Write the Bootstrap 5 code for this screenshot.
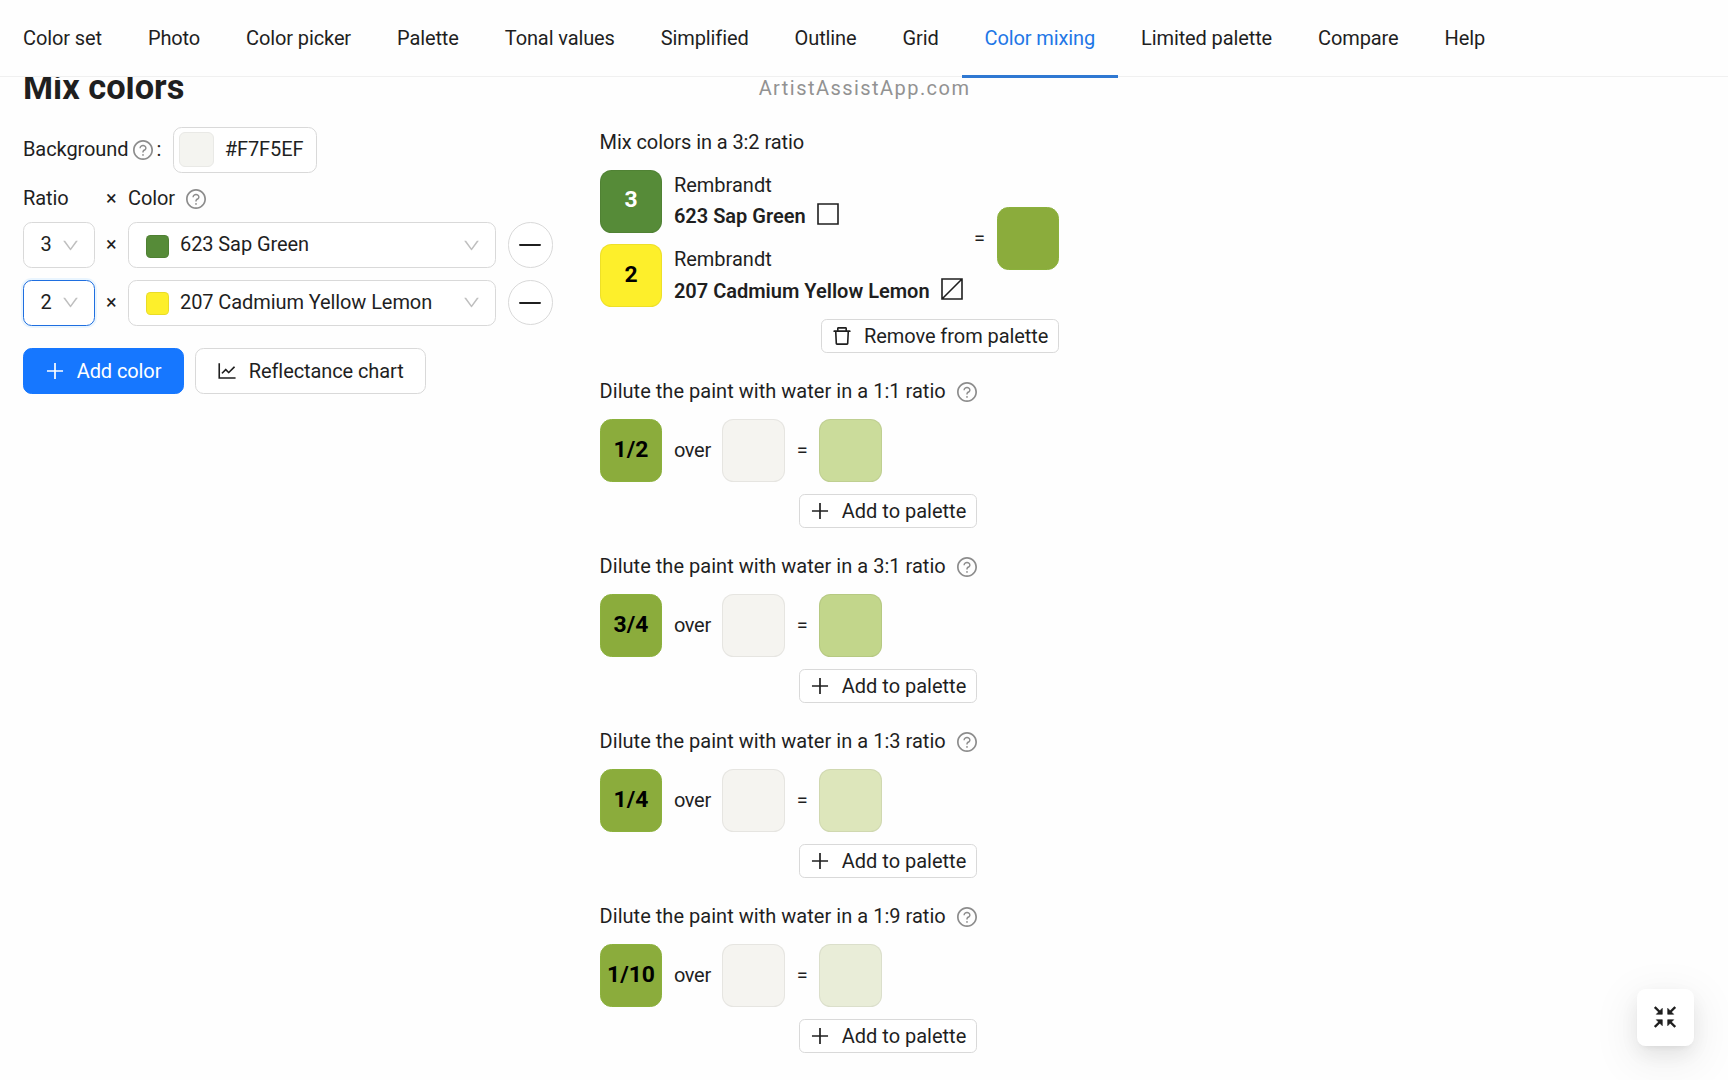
<!DOCTYPE html>
<html lang="en">
<head>
<meta charset="utf-8">
<meta name="viewport" content="width=device-width, initial-scale=1">
<title>Color mixing</title>
<link href="https://cdn.jsdelivr.net/npm/bootstrap@5.3.0/dist/css/bootstrap.min.css" rel="stylesheet">
<style>
  body { font-family: Roboto, "Liberation Sans", sans-serif; font-size: 20px; line-height: 31.6px; color: #1f1f1f; background: #fefefe; overflow: hidden; }
  .ic { width: 20px; height: 20px; fill: currentColor; flex: none; display: block; }
  .ic-help { color: #8c8c8c; }
  .ic-down { width: 17px; height: 17px; color: #bfbfbf; }
  .topbar { height: 77px; background: #fefefe; border-bottom: 1.5px solid #f0f0f0; letter-spacing: -.115px; }
  .topbar .nav-link { color: #1f1f1f; padding: 0 23px; height: 77.5px; line-height: 77px; }
  .topbar .nav-link.active { color: #1f77e6; box-shadow: inset 0 -3px #2f78d2; }
  .page { padding: 66.5px 23px 0; }
  .title-row { display: grid; grid-template-columns: 1fr auto 1fr; height: 60px; }
  .title-row h1 { font-size: 34.4px; font-weight: 700; line-height: 40px; margin: 0; }
  .site { color: #929292; letter-spacing: 1.45px; line-height: 43px; padding-left: 1px; }
  .left-pane { width: 576.6px; letter-spacing: -.09px; }
  .left-pane .tool { letter-spacing: -.09px; }
  .field { height: 46px; border: 1.3px solid #d9d9d9; border-radius: 8.6px; background: #fff; }
  .field-focus { border-color: #1f6fe0; box-shadow: 0 0 0 2px rgba(5,145,255,.08); }
  .bg-field { width: 143.5px; padding-left: 4.5px; gap: 11px; margin-left: 12px; }
  .bg-help { margin-left: 5px; }
  .colon { margin-left: 3px; }
  .bg-chip { width: 35px; height: 35px; border-radius: 6px; background: #f4f4f0; border: 1.3px solid #e9e9e6; }
  .ratio-label { width: 71.5px; }
  .color-help { margin-left: 11px; }
  .ratio-field { width: 71.5px; padding: 0 15px 0 16.5px; }
  .times { width: 33.5px; text-align: center; }
  .color-field { width: 368px; padding: 0 15px 0 17px; }
  .paint { width: 23px; height: 23px; border-radius: 4.5px; border: 1px solid rgba(0,0,0,.08); margin: 2px 11px 0 0; }
  .round-btn { width: 45.5px; height: 45.5px; border: 1.3px solid #d9d9d9; border-radius: 50%; background: #fff; margin-left: 11.5px; padding: 0; color: #1f1f1f; }
  .round-btn .ic { width: 26px; height: 26px; }
  .head-line { height: 30px; margin: 11.5px 0 8px; }
  .rows { gap: 11.5px; }
  .actions { margin-top: 22.7px; }
  .tool { --bs-btn-font-size: 20px; --bs-btn-line-height: 1; --bs-btn-color: #1f1f1f; --bs-btn-bg: #fff; --bs-btn-border-color: #d9d9d9; --bs-btn-border-width: 1.3px; --bs-btn-border-radius: 8.6px; --bs-btn-padding-y: 0; --bs-btn-padding-x: 21.2px; height: 46px; display: inline-flex; align-items: center; gap: 11.5px; white-space: nowrap; }
  .tool-main { --bs-btn-color: #fff; --bs-btn-bg: #1677ff; --bs-btn-border-color: #1677ff; }
  .tool-small { --bs-btn-border-radius: 5.7px; --bs-btn-padding-x: 10px; height: 34.4px; align-self: flex-end; }
  .tool-remove { letter-spacing: -.06px; }
  .right-pane { gap: 23px; }
  .mix { width: max-content; gap: 11.5px; }
  .mix-title { letter-spacing: .03px; }
  .mix-title-first { letter-spacing: -.08px; }
  .swatch { width: 62.8px; height: 63px; border-radius: 11.5px; border: 1.3px solid rgba(0,0,0,.06); font-size: 22.9px; font-weight: 700; color: #000; display: flex; align-items: center; justify-content: center; flex: none; padding-bottom: 2px; }
  .over { letter-spacing: -.3px; }
  .base { background: #8bac3c; border-color: #8bb13c; }
  .ground { background: #f5f4f0; }
  .g12 { gap: 11.5px; }
  .paint-name { font-weight: 600; }
  .opacity-mark { width: 22px; height: 22px; fill: none; stroke: #1f1f1f; stroke-width: 1.6; margin: -6px 0 0 11px; display: block; }
  .fab { position: fixed; right: 34px; bottom: 34px; width: 57.4px; height: 57.4px; border-radius: 8.6px; border: 0; background: #fff; padding: 0; box-shadow: 0 8px 22px rgba(0,0,0,.08), 0 4px 8px -5px rgba(0,0,0,.12), 0 12px 40px 10px rgba(0,0,0,.05); }
</style>
<script src="https://cdn.jsdelivr.net/npm/bootstrap@5.3.0/dist/js/bootstrap.bundle.min.js"></script>
</head>
<body>
<svg class="d-none">
  <symbol id="help" viewBox="64 64 896 896"><path d="M512 64C264.6 64 64 264.6 64 512s200.6 448 448 448 448-200.6 448-448S759.4 64 512 64zm0 820c-205.4 0-372-166.6-372-372s166.6-372 372-372 372 166.6 372 372-166.6 372-372 372z"/><path d="M623.6 316.7C593.6 290.4 554 276 512 276s-81.6 14.5-111.6 40.7C369.2 344 352 380.7 352 420v7.6c0 4.4 3.6 8 8 8h48c4.4 0 8-3.6 8-8V420c0-44.1 43.1-80 96-80s96 35.9 96 80c0 31.1-22 59.6-56.1 72.7-21.2 8.1-39.2 22.3-52.1 40.9-13.1 19-19.9 41.8-19.9 64.9V620c0 4.4 3.6 8 8 8h48c4.4 0 8-3.6 8-8v-22.7a48.3 48.3 0 0130.9-44.8c59-22.7 97.1-74.7 97.1-132.5.1-39.3-17.1-76-48.3-103.3zM472 732a40 40 0 1080 0 40 40 0 10-80 0z"/></symbol>
  <symbol id="down" viewBox="64 64 896 896"><path d="M884 256h-75c-5.1 0-9.9 2.5-12.9 6.6L512 654.2 227.9 262.6c-3-4.1-7.8-6.6-12.9-6.6h-75c-6.5 0-10.3 7.4-6.5 12.7l352.6 486.1c12.8 17.6 39 17.6 51.7 0l352.6-486.1c3.9-5.3.1-12.7-6.4-12.7z"/></symbol>
  <symbol id="minus" viewBox="64 64 896 896"><path d="M872 474H152c-4.4 0-8 3.6-8 8v60c0 4.4 3.6 8 8 8h720c4.4 0 8-3.6 8-8v-60c0-4.4-3.6-8-8-8z"/></symbol>
  <symbol id="plus" viewBox="64 64 896 896"><path d="M482 152h60q8 0 8 8v704q0 8-8 8h-60q-8 0-8-8V160q0-8 8-8z"/><path d="M160 474h704q8 0 8 8v60q0 8-8 8H160q-8 0-8-8v-60q0-8 8-8z"/></symbol>
  <symbol id="chart" viewBox="64 64 896 896"><path d="M888 792H200V168c0-4.4-3.6-8-8-8h-56c-4.4 0-8 3.6-8 8v688c0 4.4 3.6 8 8 8h752c4.4 0 8-3.6 8-8v-56c0-4.4-3.6-8-8-8zM305.8 637.7c3.1 3.1 8.1 3.1 11.3 0l138.3-137.6L583 628.5c3.1 3.1 8.2 3.1 11.3 0l275.4-275.3c3.1-3.1 3.1-8.2 0-11.3l-39.6-39.6a8.03 8.03 0 00-11.3 0l-230 229.9L461.4 404a8.03 8.03 0 00-11.3 0L266.3 586.7a8.03 8.03 0 000 11.3l39.5 39.7z"/></symbol>
  <symbol id="trash" viewBox="64 64 896 896"><path d="M360 184h-8c4.4 0 8-3.6 8-8v8h304v-8c0 4.4 3.6 8 8 8h-8v72h72v-80c0-35.3-28.7-64-64-64H352c-35.3 0-64 28.7-64 64v80h72v-72zm504 72H160c-17.7 0-32 14.3-32 32v32c0 4.4 3.6 8 8 8h60.4l24.7 523c1.6 34.1 29.8 61 63.9 61h454c34.2 0 62.3-26.8 63.9-61l24.7-523H888c4.4 0 8-3.6 8-8v-32c0-17.7-14.3-32-32-32zM731.3 840H292.7l-24.2-512h487l-24.2 512z"/></symbol>
</svg>

<nav class="topbar fixed-top">
  <ul class="nav flex-nowrap">
    <li class="nav-item"><a class="nav-link" href="#">Color set</a></li>
    <li class="nav-item"><a class="nav-link" href="#">Photo</a></li>
    <li class="nav-item"><a class="nav-link" href="#">Color picker</a></li>
    <li class="nav-item"><a class="nav-link" href="#">Palette</a></li>
    <li class="nav-item"><a class="nav-link" href="#">Tonal values</a></li>
    <li class="nav-item"><a class="nav-link" href="#">Simplified</a></li>
    <li class="nav-item"><a class="nav-link" href="#">Outline</a></li>
    <li class="nav-item"><a class="nav-link" href="#">Grid</a></li>
    <li class="nav-item"><a class="nav-link active" href="#">Color mixing</a></li>
    <li class="nav-item"><a class="nav-link" href="#">Limited palette</a></li>
    <li class="nav-item"><a class="nav-link" href="#">Compare</a></li>
    <li class="nav-item"><a class="nav-link" href="#">Help</a></li>
  </ul>
</nav>

<main class="page">
  <div class="title-row"><h1>Mix colors</h1><div class="site">ArtistAssistApp.com</div></div>
  <div class="d-flex">
    <section class="left-pane flex-shrink-0">
      <div class="d-flex align-items-center">
        <span>Background</span><svg class="ic ic-help bg-help"><use href="#help"/></svg><span class="colon">:</span>
        <div class="field bg-field d-flex align-items-center"><span class="bg-chip"></span><span>#F7F5EF</span></div>
      </div>
      <div class="head-line d-flex align-items-center"><span class="ratio-label">Ratio</span><span class="times">×</span><span>Color</span><svg class="ic ic-help color-help"><use href="#help"/></svg></div>
      <div class="rows d-flex flex-column">
        <div class="d-flex align-items-center">
          <div class="field ratio-field d-flex align-items-center justify-content-between">3<svg class="ic ic-down"><use href="#down"/></svg></div>
          <span class="times">×</span>
          <div class="field color-field d-flex align-items-center"><span class="paint" style="background:#568b38"></span>623 Sap Green<svg class="ic ic-down ms-auto"><use href="#down"/></svg></div>
          <button class="round-btn d-flex align-items-center justify-content-center" aria-label="Remove"><svg class="ic"><use href="#minus"/></svg></button>
        </div>
        <div class="d-flex align-items-center">
          <div class="field field-focus ratio-field d-flex align-items-center justify-content-between">2<svg class="ic ic-down"><use href="#down"/></svg></div>
          <span class="times">×</span>
          <div class="field color-field d-flex align-items-center"><span class="paint" style="background:#fdef2b"></span>207 Cadmium Yellow Lemon<svg class="ic ic-down ms-auto"><use href="#down"/></svg></div>
          <button class="round-btn d-flex align-items-center justify-content-center" aria-label="Remove"><svg class="ic"><use href="#minus"/></svg></button>
        </div>
      </div>
      <div class="actions d-flex g12">
        <button class="btn tool tool-main"><svg class="ic"><use href="#plus"/></svg>Add color</button>
        <button class="btn tool"><svg class="ic"><use href="#chart"/></svg>Reflectance chart</button>
      </div>
    </section>

    <section class="right-pane d-flex flex-column">
      <div class="mix d-flex flex-column">
        <div class="mix-title-first">Mix colors in a 3:2 ratio</div>
        <div class="d-flex align-items-center g12">
          <div class="parts d-flex flex-column g12">
            <div class="d-flex g12"><div class="swatch text-white" style="background:#568b38">3</div><div>Rembrandt<div class="d-flex align-items-center paint-name">623 Sap Green<svg class="opacity-mark" viewBox="0 0 22 22"><path d="M1 1h20v20H1z"/></svg></div></div></div>
            <div class="d-flex g12"><div class="swatch" style="background:#fdef2b">2</div><div>Rembrandt<div class="d-flex align-items-center paint-name">207 Cadmium Yellow Lemon<svg class="opacity-mark" viewBox="0 0 22 22"><path d="M1 1h20v20H1zM1 21L21 1"/></svg></div></div></div>
          </div>
          <span>=</span><div class="swatch base"></div>
        </div>
        <button class="btn tool tool-small tool-remove"><svg class="ic"><use href="#trash"/></svg>Remove from palette</button>
      </div>

      <div class="mix d-flex flex-column">
        <div class="mix-title d-flex align-items-center g12">Dilute the paint with water in a 1:1 ratio<svg class="ic ic-help"><use href="#help"/></svg></div>
        <div class="d-flex align-items-center g12"><div class="swatch base">1/2</div><span class="over">over</span><div class="swatch ground"></div><span>=</span><div class="swatch" style="background:#cbdc9b"></div></div>
        <button class="btn tool tool-small"><svg class="ic"><use href="#plus"/></svg>Add to palette</button>
      </div>
      <div class="mix d-flex flex-column">
        <div class="mix-title d-flex align-items-center g12">Dilute the paint with water in a 3:1 ratio<svg class="ic ic-help"><use href="#help"/></svg></div>
        <div class="d-flex align-items-center g12"><div class="swatch base">3/4</div><span class="over">over</span><div class="swatch ground"></div><span>=</span><div class="swatch" style="background:#c2d68b"></div></div>
        <button class="btn tool tool-small"><svg class="ic"><use href="#plus"/></svg>Add to palette</button>
      </div>
      <div class="mix d-flex flex-column">
        <div class="mix-title d-flex align-items-center g12">Dilute the paint with water in a 1:3 ratio<svg class="ic ic-help"><use href="#help"/></svg></div>
        <div class="d-flex align-items-center g12"><div class="swatch base">1/4</div><span class="over">over</span><div class="swatch ground"></div><span>=</span><div class="swatch" style="background:#dde6bb"></div></div>
        <button class="btn tool tool-small"><svg class="ic"><use href="#plus"/></svg>Add to palette</button>
      </div>
      <div class="mix d-flex flex-column">
        <div class="mix-title d-flex align-items-center g12">Dilute the paint with water in a 1:9 ratio<svg class="ic ic-help"><use href="#help"/></svg></div>
        <div class="d-flex align-items-center g12"><div class="swatch base">1/10</div><span class="over">over</span><div class="swatch ground"></div><span>=</span><div class="swatch" style="background:#e9edd8"></div></div>
        <button class="btn tool tool-small"><svg class="ic"><use href="#plus"/></svg>Add to palette</button>
      </div>
    </section>
  </div>
</main>
<button class="fab d-flex align-items-center justify-content-center" aria-label="Exit full screen">
  <svg width="22" height="22" viewBox="0 0 22 22" fill="#1f1f1f" stroke="#1f1f1f"><g id="arrow"><path d="M.8 1l5 5" stroke-width="2.4" fill="none"/><path d="M8.3 2.3v6h-6z" stroke-width=".6"/></g><use href="#arrow" transform="matrix(-1 0 0 1 22 0)"/><use href="#arrow" transform="matrix(1 0 0 -1 0 22)"/><use href="#arrow" transform="rotate(180 11 11)"/></svg>
</button>
</body>
</html>
